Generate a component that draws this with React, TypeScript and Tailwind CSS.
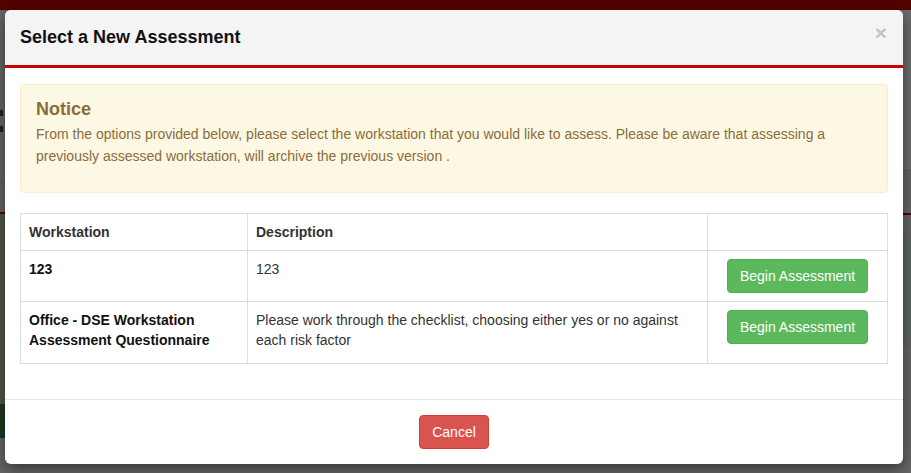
import React from 'react';

const rows = [
  { name: '123', desc: '123', h: 'h-[51px]' },
  {
    name: 'Office - DSE Workstation Assessment Questionnaire',
    desc: 'Please work through the checklist, choosing either yes or no against each risk factor',
    h: 'h-[62px]',
  },
];

const Backdrop: React.FC = () => (
  <div className="flex flex-col w-[911px] h-[473px] bg-[#676767]">
    <div className="h-[10px] bg-[#560000]" />
    <div className="flex flex-1">
      <div className="flex flex-col w-1/2">
        <div className="h-[100px]" />
        <div className="h-[6px] w-[3px] bg-[#222]" />
        <div className="h-[10px]" />
        <div className="h-[6px] w-[3px] bg-[#222]" />
        <div className="h-[50px]" />
        <div className="h-px bg-[#5a5a5a]" />
        <div className="h-[29px]" />
        <div className="h-[2px] bg-[#5c0000]" />
        <div className="h-[190px] bg-[#52584f]" />
        <div className="h-[34px] bg-[#1f3a1f]" />
      </div>
      <div className="flex flex-col w-1/2">
        <div className="h-[160px] bg-[#6d6d6d]" />
        <div className="h-px bg-[#5a5a5a]" />
        <div className="h-[42px]" />
        <div className="h-[2px] bg-[#5c0000]" />
        <div className="h-[16px]" />
        <div className="h-[115px] bg-[#5d6566]" />
      </div>
    </div>
  </div>
);

export default function App() {
  return (
    <div className="relative w-[911px] h-[473px] overflow-hidden font-['Liberation_Sans',Arial,sans-serif] text-[14px] text-[#333]">
      <Backdrop />
      <div className="absolute left-[5px] top-[10px] w-[898px] bg-white rounded-[6px] overflow-hidden shadow-[0_5px_15px_rgba(0,0,0,0.5)]">
        <div className="flex items-center justify-between h-[58px] pl-[15px] pr-[16px] bg-[#f4f4f4] border-b-[3px] border-[#cc0000]">
          <h4 className="text-[18px] font-bold text-[#111] leading-[20px] -mt-[2px]">Select a New Assessment</h4>
          <button className="text-[21px] font-bold leading-none text-[#c3c3c3] -mt-[10px]">×</button>
        </div>
        <div className="px-[15px] pt-[16px] pb-[35px]">
          <div className="bg-[#fcf8e3] border border-[#faebcc] rounded-[4px] px-[15px] pt-[14px] pb-[25px] text-[#8a6d3b]">
            <h4 className="text-[18px] font-bold leading-[20px] mb-[4px]">Notice</h4>
            <p className="leading-[22px]">
              From the options provided below, please select the workstation that you would like to assess. Please be aware that assessing a previously assessed workstation, will archive the previous version .
            </p>
          </div>
          <table className="w-full mt-[20px] border-collapse border border-[#dddddd]">
            <thead>
              <tr className="h-[37px]">
                <th className="w-[227px] border border-[#dddddd] px-[8px] text-left font-bold leading-[20px]">Workstation</th>
                <th className="w-[460px] border border-[#dddddd] px-[8px] text-left font-bold leading-[20px]">Description</th>
                <th className="border border-[#dddddd] px-[8px]" />
              </tr>
            </thead>
            <tbody>
              {rows.map(r => (
                <tr key={r.name} className={r.h}>
                  <td className="border border-[#dddddd] px-[8px] pt-[8px] align-top font-bold leading-[20px] text-[#111]">{r.name}</td>
                  <td className="border border-[#dddddd] px-[8px] pt-[8px] align-top leading-[20px]">{r.desc}</td>
                  <td className="border border-[#dddddd] px-[8px] pt-[8px] align-top text-center">
                    <button className="h-[34px] px-[12px] bg-[#5cb85c] border border-[#4cae4c] rounded-[4px] text-white leading-[20px]">Begin Assessment</button>
                  </td>
                </tr>
              ))}
            </tbody>
          </table>
        </div>
        <div className="flex justify-center pt-[15px] pb-[15px] border-t border-[#e5e5e5]">
          <button className="h-[34px] px-[12px] bg-[#d9534f] border border-[#d43f3a] rounded-[4px] text-white leading-[20px]">Cancel</button>
        </div>
      </div>
    </div>
  );
}
